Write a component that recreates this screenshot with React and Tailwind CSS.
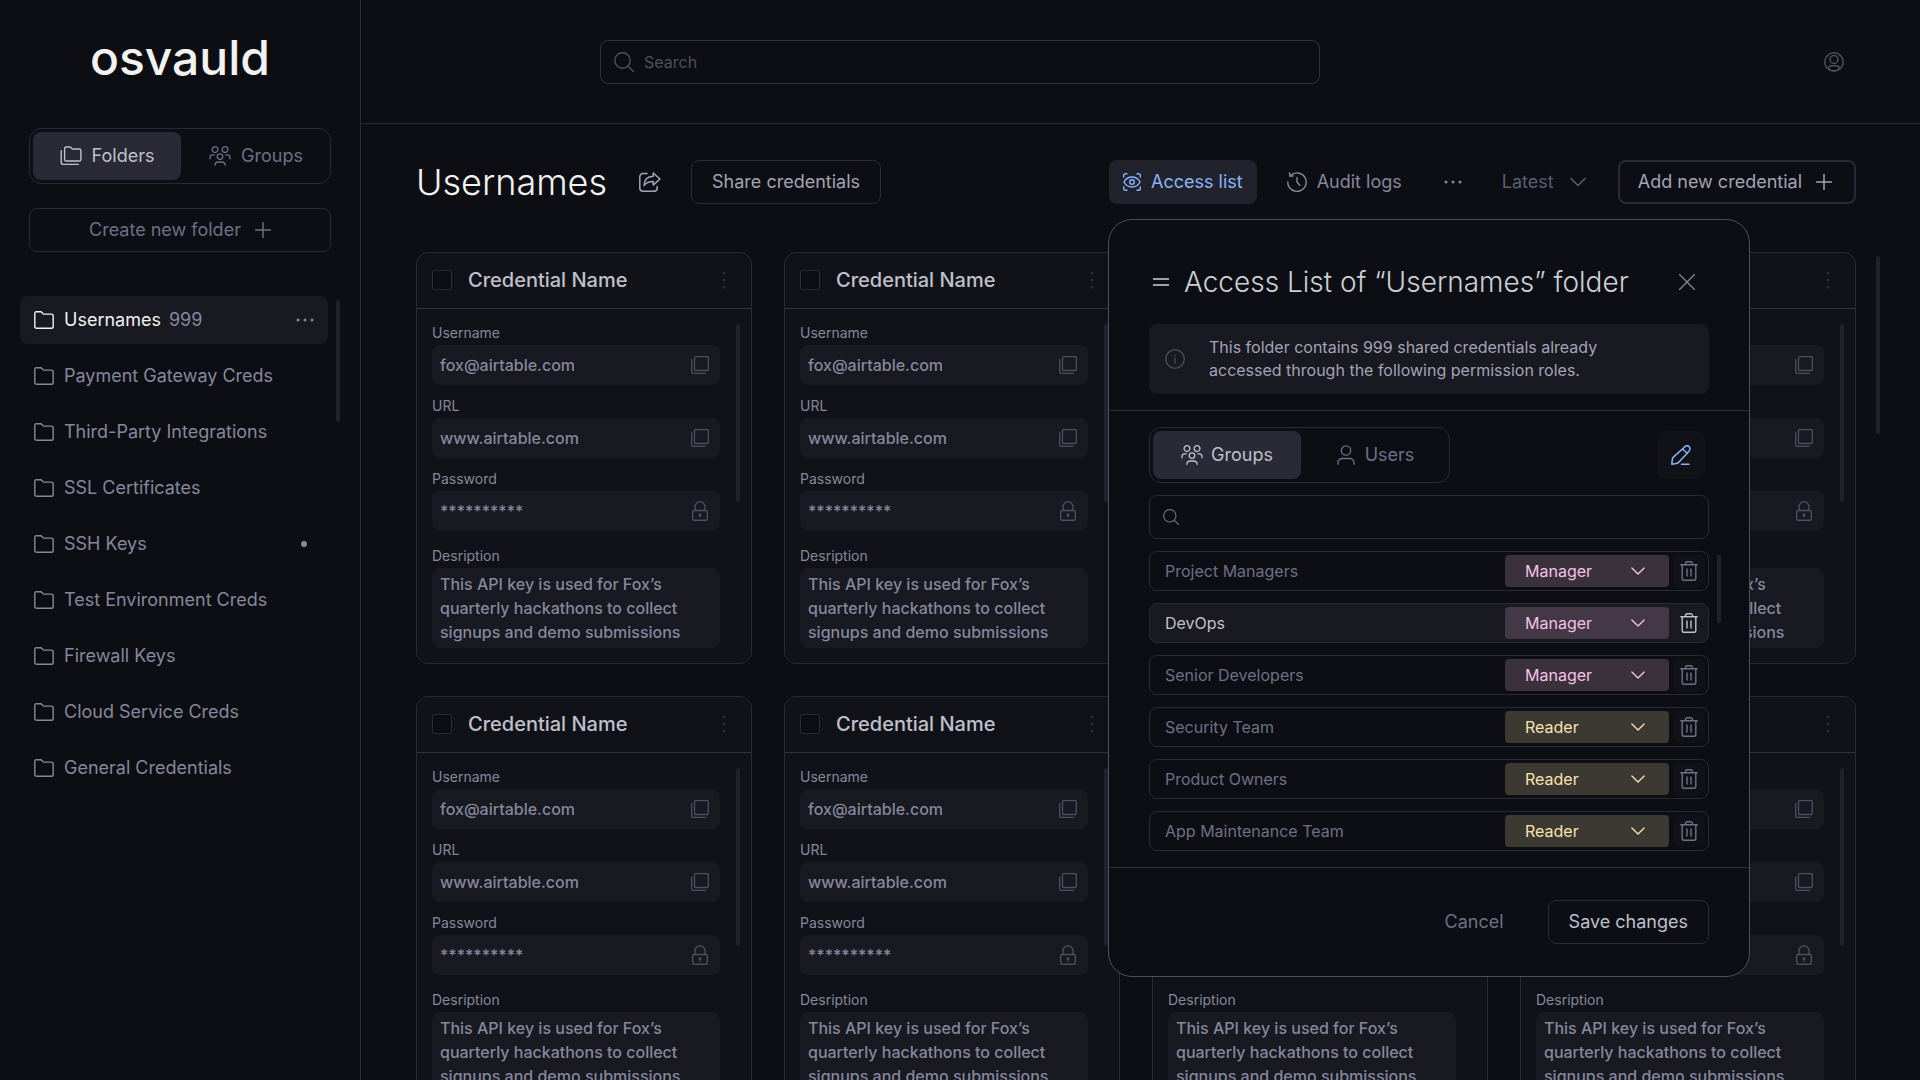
import React from "react";

const strokeProps = {
  fill: "none",
  stroke: "currentColor",
  strokeWidth: 1.3,
  strokeLinecap: "round",
  strokeLinejoin: "round",
  "aria-hidden": true,
};

function FolderIcon({ className = "" }) {
  return (
    <svg viewBox="0 0 20 18" className={`h-[18px] w-5 shrink-0 ${className}`} {...strokeProps} strokeWidth="1.4">
      <path d="M.8 2.4C.8 1.5 1.5.8 2.400.8H6.600c.5 0 .9.1 1.200.5l1.300 1.400c.3.3.7.4 1.100.4h7.200c1 0 1.800.8 1.800 1.800v10.500c0 1-.8 1.800-1.800 1.800H2.600c-1 0-1.800-.8-1.800-1.800z" />
    </svg>
  );
}

function FoldersIcon() {
  return (
    <svg viewBox="0 0 22 20" className="h-5 w-[22px] shrink-0" {...strokeProps} strokeWidth="1.4">
      <path d="M4.600 2.500c0-.8.6-1.500 1.500-1.500h3.600c.4 0 .8.2 1.100.5l1 1.100c.3.3.6.4 1 .4h6.500c.9 0 1.600.7 1.600 1.600v8.800c0 .9-.7 1.600-1.600 1.600H6.200c-.9 0-1.600-.7-1.600-1.600z" />
      <path d="M1.200 4.800v11.500c0 1.200.9 2.100 2.100 2.100h15" />
    </svg>
  );
}

function GroupIcon() {
  return (
    <svg viewBox="0 0 22 20" className="h-5 w-[22px] shrink-0" {...strokeProps}>
      <circle cx="6" cy="3.600" r="2.900" />
      <circle cx="16" cy="3.600" r="2.900" />
      <circle cx="11" cy="10.600" r="2.800" />
      <path d="M1 12.800V11.500c0-1.600 1.200-2.700 2.700-2.700h1.500M21 12.800V11.500c0-1.600-1.200-2.700-2.700-2.700h-1.500M5.800 19.300c.2-2.100 1.500-3.300 3.300-3.300h3.800c1.800 0 3.100 1.200 3.300 3.300" />
    </svg>
  );
}

function UserIcon() {
  return (
    <svg viewBox="0 0 18 20" className="h-5 w-[18px] shrink-0" {...strokeProps}>
      <circle cx="9" cy="5.500" r="4.700" />
      <path d="M1 19.300v-1.500c0-2.400 1.900-4.300 4.300-4.300h7.400c2.400 0 4.300 1.900 4.300 4.300v1.500" />
    </svg>
  );
}

function PlusIcon() {
  return (
    <svg viewBox="0 0 16 16" className="size-4 shrink-0" {...strokeProps} strokeWidth="1.5">
      <path d="M8 .5v15M.5 8h15" />
    </svg>
  );
}

function SearchIcon({ className = "size-5" }) {
  return (
    <svg viewBox="0 0 20 20" className={`shrink-0 ${className}`} {...strokeProps} strokeWidth="1.4">
      <circle cx="8.500" cy="8.500" r="7.700" />
      <path d="m14 14 5.400 5.400" />
    </svg>
  );
}

function DotsIcon() {
  return (
    <svg viewBox="0 0 18 4" className="h-1 w-[18px] shrink-0" fill="currentColor" aria-hidden="true">
      <circle cx="2" cy="2" r="1.500" />
      <circle cx="9" cy="2" r="1.500" />
      <circle cx="16" cy="2" r="1.500" />
    </svg>
  );
}

function VerticalDotsIcon() {
  return (
    <svg viewBox="0 0 4 18" className="h-[18px] w-1 shrink-0" fill="currentColor" aria-hidden="true">
      <circle cx="2" cy="2" r="1.500" />
      <circle cx="2" cy="9" r="1.500" />
      <circle cx="2" cy="16" r="1.500" />
    </svg>
  );
}

function ChevronIcon({ className = "" }) {
  return (
    <svg viewBox="0 0 16 16" className={`shrink-0 ${className}`} {...strokeProps} strokeWidth="1.5">
      <path d="m1 4.500 7 7 7-7" />
    </svg>
  );
}

function ShareIcon() {
  return (
    <svg viewBox="0 0 22 20" className="h-5 w-[22px]" {...strokeProps} strokeWidth="1.5">
      <path d="M8 1.500H4A3.200 3.200 0 0 0 .8 4.700V16A3.200 3.200 0 0 0 4 19.200h11a3.200 3.200 0 0 0 3.200-3.200v-1.500" />
      <path d="M14.200 1v3.300C8.500 4.500 5.200 8 5 13.600c2.200-2.900 5-4.100 9.200-4v3.500L21 7z" />
    </svg>
  );
}

function EyeScanIcon() {
  return (
    <svg viewBox="0 0 18 18" className="size-[18px] shrink-0" {...strokeProps} strokeWidth="1.4">
      <path d="M.7 4V2.500C.7 1.500 1.500.7 2.500.7H4M14 .7h1.500c1 0 1.800.8 1.800 1.800V4M17.300 14v1.500c0 1-.8 1.800-1.800 1.800H14M4 17.300H2.500c-1 0-1.800-.8-1.800-1.800V14" />
      <path d="M.9 9C2.800 5.700 5.600 4 9 4s6.200 1.700 8.100 5c-1.900 3.300-4.700 5-8.100 5S2.800 12.300.9 9z" />
      <circle cx="9" cy="9" r="2.300" />
    </svg>
  );
}

function HistoryIcon() {
  return (
    <svg viewBox="0 0 20 20" className="size-5 shrink-0" {...strokeProps} strokeWidth="1.4">
      <path d="M3.300 3.800A9.200 9.200 0 1 1 .8 10" />
      <path d="M2.600.8 3 4.200l3.500-.3" />
      <path d="M10 5.500V10l2.800 3.200" />
    </svg>
  );
}

function CopyIcon() {
  return (
    <svg viewBox="0 0 18 18" className="size-[18px]" {...strokeProps} strokeLinecap="butt">
      <rect x="3.500" y=".7" width="13.800" height="13.800" rx=".8" />
      <path d="M.7 3.200v12.900c0 .7.5 1.200 1.200 1.200h12.900" />
    </svg>
  );
}

function LockIcon() {
  return (
    <svg viewBox="0 0 18 20" className="h-5 w-[18px]" {...strokeProps} strokeWidth="1.400">
      <rect x="1.700" y="9.500" width="14.600" height="9.800" rx="1.600" />
      <path d="M4 9.500V5.700a5 5 0 0 1 10 0v3.800" />
      <circle cx="9" cy="13.700" r=".8" fill="currentColor" />
      <path d="M9 14v2" />
    </svg>
  );
}

function TrashIcon() {
  return (
    <svg viewBox="0 0 18 20" className="h-5 w-[18px]" {...strokeProps} strokeWidth="1.400">
      <path d="M.8 3.700h16.400M5.500 3.500V2.600c0-1 .7-1.800 1.700-1.800h3.600c1 0 1.700.8 1.700 1.800v.9" />
      <path d="M2.200 3.900v13.800c0 .9.6 1.500 1.500 1.500h10.600c.9 0 1.500-.6 1.500-1.500V3.900M7 8v7M11 8v7" />
    </svg>
  );
}

function PencilIcon() {
  return (
    <svg viewBox="0 0 20 20" className="size-5" {...strokeProps} strokeWidth="1.500">
      <path d="M13.400 2.200c1.200-1.500 3-1.900 4.400-.8s1.600 3 .4 4.500L8 16.900c-.8.9-1.600 1.300-2.700 1.500L.8 19.200l.5-4.500c.1-1.100.5-2 1.300-2.800z" />
      <path d="m11.700 4.200 4.500 4M10.500 19.200H18" />
    </svg>
  );
}

function InfoIcon() {
  return (
    <svg viewBox="0 0 20 20" className="size-5 shrink-0" {...strokeProps}>
      <circle cx="10" cy="10" r="9.300" />
      <path d="M10 9v5M10 6v.3" />
    </svg>
  );
}

function AvatarIcon() {
  return (
    <svg viewBox="0 0 20 20" className="size-5" {...strokeProps} strokeWidth="1.500">
      <circle cx="10" cy="10" r="9.200" />
      <circle cx="10" cy="7.500" r="4" />
      <path d="M4.500 17c.2-2.100 1.300-3.200 3-3.200h5c1.700 0 2.800 1.100 3 3.200-3 2.200-8 2.200-11 0z" />
    </svg>
  );
}

const folders = [
  { name: "Usernames", count: 999, active: true },
  { name: "Payment Gateway Creds" },
  { name: "Third-Party Integrations" },
  { name: "SSL Certificates" },
  { name: "SSH Keys", marked: true },
  { name: "Test Environment Creds" },
  { name: "Firewall Keys" },
  { name: "Cloud Service Creds" },
  { name: "General Credentials" },
];

function Sidebar() {
  return (
    <aside className="flex w-[361px] shrink-0 flex-col border-r border-[#292a36]">
      <a href="#home" className="mt-6 block text-center text-5xl leading-[68px] font-medium text-[#f2f2f0]">
        osvauld
      </a>
      <div className="mx-[29px] mt-9 flex h-14 gap-1 rounded-xl border border-[#292a36] p-[3px]">
        <button className="flex w-[148px] items-center justify-center gap-[10px] rounded-lg bg-[#292a36] text-lg text-[#bfc0cc]">
          <FoldersIcon />
          Folders
        </button>
        <button className="flex flex-1 items-center justify-center gap-[10px] rounded-lg text-lg text-[#6d7086]">
          <GroupIcon />
          Groups
        </button>
      </div>
      <button className="mx-[29px] mt-6 flex h-11 items-center justify-center gap-[14px] rounded-lg border border-[#292a36] text-lg text-[#6d7086]">
        Create new folder
        <PlusIcon />
      </button>
      <div className="mt-11 flex gap-2 pr-5 pl-5">
        <nav className="flex flex-1 flex-col gap-2">
          {folders.map((f) => (
            <div
              key={f.name}
              className={`flex h-12 items-center rounded-lg px-[14px] text-lg ${f.active ? "bg-[#181921] text-[#f2f2f0]" : "text-[#85889c]"}`}
            >
              <a href="#folder" className="flex flex-1 items-center gap-[10px]">
                <FolderIcon />
                <span>
                  {f.name}
                  {f.count && <span className="ml-2 text-[#85889c]">{f.count}</span>}
                </span>
              </a>
              {f.active && (
                <button aria-label="Folder options" className="text-[#85889c]">
                  <DotsIcon />
                </button>
              )}
              {f.marked && <span className="mr-[7px] size-1.5 rounded-full bg-[#85889c]" />}
            </div>
          ))}
        </nav>
        <div className="mt-1 h-[122px] w-1 rounded-full bg-[#21222b]" />
      </div>
    </aside>
  );
}

function Field({ id, label, value, locked }) {
  return (
    <div>
      <label htmlFor={id} className="mb-1 block text-sm leading-[17px] text-[#85889c]">
        {label}
      </label>
      <div className="flex h-10 items-center rounded-lg bg-[#181921] pr-2 pl-2">
        <input id={id} readOnly defaultValue={value} className="min-w-0 flex-1 bg-transparent text-base font-medium text-[#85889c] outline-none" />
        <button aria-label={locked ? "Reveal" : "Copy"} className="grid size-6 place-items-center text-[#4d4f60]">
          {locked ? <LockIcon /> : <CopyIcon />}
        </button>
      </div>
    </div>
  );
}

function CredentialCard({ index }) {
  const id = `credential-${index}`;
  return (
    <article className="rounded-xl border border-[#292a36] bg-[#111218]">
      <header className="flex h-14 items-center border-b border-[#2f303e] pr-[25px] pb-px pl-[15px]">
        <input id={`${id}-check`} type="checkbox" className="size-5 appearance-none rounded-xs border border-[#292a36] bg-[#0d0e13]" />
        <label htmlFor={`${id}-check`} className="ml-4 flex-1 text-xl font-medium text-[#bfc0cc]">
          Credential Name
        </label>
        <button aria-label="Credential options" className="text-[#292a36]">
          <VerticalDotsIcon />
        </button>
      </header>
      <div className="flex gap-4 pt-[15px] pr-[11px] pb-[15px] pl-[15px]">
        <div className="flex min-w-0 flex-1 flex-col gap-3">
          <Field id={`${id}-user`} label="Username" value="fox@airtable.com" />
          <Field id={`${id}-url`} label="URL" value="www.airtable.com" />
          <Field id={`${id}-pass`} label="Password" value="**********" locked />
          <div className="mt-1">
            <label htmlFor={`${id}-desc`} className="mb-1 block text-sm leading-[17px] text-[#85889c]">
              Desription
            </label>
            <textarea
              id={`${id}-desc`}
              readOnly
              rows={3}
              defaultValue="This API key is used for Fox’s quarterly hackathons to collect signups and demo submissions"
              className="block w-full resize-none overflow-hidden rounded-lg bg-[#181921] px-2 py-1 text-base leading-6 font-medium text-[#85889c] outline-none"
            />
          </div>
        </div>
        <div className="h-[178px] w-1 rounded-full bg-[#21222b]" />
      </div>
    </article>
  );
}

const groups = [
  { name: "Project Managers", role: "Manager" },
  { name: "DevOps", role: "Manager", active: true },
  { name: "Senior Developers", role: "Manager" },
  { name: "Security Team", role: "Reader" },
  { name: "Product Owners", role: "Reader" },
  { name: "App Maintenance Team", role: "Reader" },
];

function GroupRow({ name, role, active }) {
  const tone =
    role === "Reader" ? "bg-[#3c3832] text-[#f9e2af]" : active ? "bg-[#443846] text-[#f5c2e7]" : "bg-[#3b313c] text-[#f5c2e7]";
  return (
    <li className={`flex h-10 items-center rounded-lg border border-[#292a36] pr-[3px] pl-[15px] ${active ? "bg-[#181921]" : ""}`}>
      <span className={`flex-1 text-base ${active ? "text-[#bfc0cc]" : "text-[#6d7086]"}`}>{name}</span>
      <div className="relative">
        <select aria-label={`Role of ${name}`} defaultValue={role} className={`h-8 w-[164px] appearance-none rounded-sm px-5 text-base ${tone}`}>
          <option>Manager</option>
          <option>Reader</option>
        </select>
        <ChevronIcon className={`pointer-events-none absolute top-[9px] right-6 size-[14px] ${role === "Reader" ? "text-[#f9e2af]" : "text-[#f5c2e7]"}`} />
      </div>
      <button
        aria-label={`Remove ${name}`}
        className={`ml-1 grid size-8 place-items-center rounded-md ${active ? "text-[#bfc0cc]" : "bg-[#111218] text-[#6d7086]"}`}
      >
        <TrashIcon />
      </button>
    </li>
  );
}

function AccessDialog() {
  return (
    <section
      role="dialog"
      aria-label="Access list"
      className="absolute top-full -left-px z-10 mt-[15px] w-[642px] rounded-3xl border border-[#4d4f60] bg-[#0d0e13]"
    >
      <div className="px-10 pt-10 pb-4">
        <header className="flex h-11 items-center">
          <svg viewBox="0 0 24 16" className="h-4 w-6" fill="none" stroke="#cdd3d8" strokeWidth="1.5" aria-hidden="true">
            <path d="M4 5h16M4 11h16" />
          </svg>
          <h2 className="ml-[11px] flex-1 text-[28px] leading-9 font-light text-[#cbd0d6]">Access List of “Usernames” folder</h2>
          <button aria-label="Close" className="mr-[14px] text-[#85889c]">
            <svg viewBox="0 0 16 16" className="size-4" {...strokeProps}>
              <path d="m.5.5 15 15M15.500.5l-15 15" />
            </svg>
          </button>
        </header>
        <div className="mt-5 flex h-[70px] items-center gap-6 rounded-lg bg-[#181921] px-4">
          <span className="text-[#4d4f60]">
            <InfoIcon />
          </span>
          <p className="flex-1 text-base leading-[23px] text-[#a3a4b5]">
            This folder contains 999 shared credentials already
            <br />
            accessed through the following permission roles.
          </p>
        </div>
      </div>
      <div className="border-y border-[#2f303e] px-10 py-4">
        <div className="flex items-center justify-between pr-1">
          <div className="flex h-14 w-[301px] gap-1 rounded-xl border border-[#292a36] p-[3px]">
            <button className="flex w-[148px] items-center justify-center gap-2 rounded-lg bg-[#292a36] text-lg text-[#bfc0cc]">
              <GroupIcon />
              Groups
            </button>
            <button className="flex flex-1 items-center justify-center gap-[10px] rounded-lg text-lg text-[#6d7086]">
              <UserIcon />
              Users
            </button>
          </div>
          <button aria-label="Edit access" className="grid size-12 place-items-center rounded-lg bg-[#111218] text-[#89b4fa]">
            <PencilIcon />
          </button>
        </div>
        <label className="mt-3 flex h-11 items-center gap-3 rounded-lg border border-[#292a36] px-[13px] text-[#6d7086]">
          <SearchIcon className="size-4" />
          <input aria-label="Search groups" className="min-w-0 flex-1 bg-transparent text-base outline-none" />
        </label>
        <div className="mt-3 -mr-3 flex gap-2">
          <ul className="flex flex-1 flex-col gap-3">
            {groups.map((g) => (
              <GroupRow key={g.name} {...g} />
            ))}
          </ul>
          <div className="mt-1 h-[68px] w-1 rounded-full bg-[#21222b]" />
        </div>
      </div>
      <footer className="flex items-center justify-end px-10 py-8 text-lg">
        <button className="px-4 text-[#6d7086]">Cancel</button>
        <button className="ml-7 h-11 rounded-lg border border-[#292a36] px-5 text-[#bfc0cc]">Save changes</button>
      </footer>
    </section>
  );
}

function Toolbar() {
  return (
    <div className="flex items-center pr-16 text-lg">
      <h1 className="text-4xl leading-[44px] font-light text-[#f2f2f0]">Usernames</h1>
      <button aria-label="Share folder" className="ml-8 text-[#a3a4b5]">
        <ShareIcon />
      </button>
      <button className="ml-[30px] h-11 rounded-lg border border-[#292a36] px-5 text-[#a3a4b5]">Share credentials</button>
      <div className="relative ml-auto">
        <button className="flex h-11 items-center gap-[10px] rounded-lg bg-[#21222b] px-[14px] text-[#89b4fa]">
          <EyeScanIcon />
          Access list
        </button>
        <AccessDialog />
      </div>
      <button className="ml-[30px] flex items-center gap-[10px] text-[#85889c]">
        <HistoryIcon />
        Audit logs
      </button>
      <button aria-label="More" className="ml-[42px] text-[#85889c]">
        <DotsIcon />
      </button>
      <div className="relative ml-10 text-[#5c5e71]">
        <select aria-label="Sort order" className="w-[84px] appearance-none bg-transparent">
          <option>Latest</option>
        </select>
        <ChevronIcon className="pointer-events-none absolute top-[6px] right-0 size-4" />
      </div>
      <button className="ml-8 flex h-11 items-center gap-[14px] rounded-lg border-2 border-[#292a36] pr-[22px] pl-[18px] text-[#a3a4b5]">
        Add new credential
        <PlusIcon />
      </button>
    </div>
  );
}

export default function App() {
  return (
    <div className="flex h-screen overflow-hidden bg-[#0d0e13] font-[Inter,sans-serif]">
      <Sidebar />
      <main className="flex min-w-0 flex-1 flex-col">
        <header className="flex h-[124px] shrink-0 items-center justify-between border-b border-[#292a36] pr-[76px] pl-[239px]">
          <label className="flex h-11 max-w-[720px] flex-1 items-center gap-[10px] rounded-lg border border-[#2f303e] px-[13px] text-[#4d4f60]">
            <SearchIcon />
            <input type="search" placeholder="Search" className="min-w-0 flex-1 bg-transparent text-base outline-none placeholder:text-[#4d4f60]" />
          </label>
          <button aria-label="Account" className="text-[#4d4f60]">
            <AvatarIcon />
          </button>
        </header>
        <div className="flex-1 pt-9 pl-[55px]">
          <Toolbar />
          <div className="mt-12 flex gap-5 pr-10">
            <div className="grid flex-1 grid-cols-4 gap-8">
              {[1, 2, 3, 4, 5, 6, 7, 8].map((n) => (
                <CredentialCard key={n} index={n} />
              ))}
            </div>
            <div className="mt-1 h-[178px] w-1 rounded-full bg-[#21222b]" />
          </div>
        </div>
      </main>
    </div>
  );
}
